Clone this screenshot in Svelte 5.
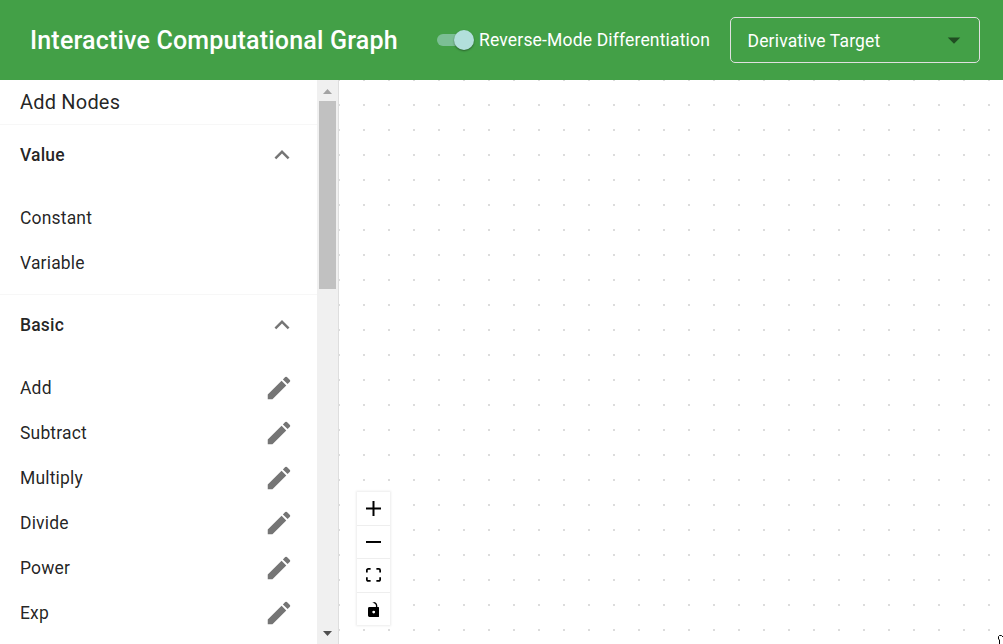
<script>
  const groups = [
    { name: 'Value', editable: false, items: ['Constant', 'Variable'] },
    { name: 'Basic', editable: true, items: ['Add', 'Subtract', 'Multiply', 'Divide', 'Power', 'Exp'] },
  ];
  const controls = [
    { name: 'plus', box: '0 0 32 32', d: 'M32 18.133H18.133V32h-4.266V18.133H0v-4.266h13.867V0h4.266v13.867H32z' },
    { name: 'minus', box: '0 0 32 5', d: 'M0 0h32v4.2H0z' },
    {
      name: 'fit',
      box: '0 0 32 30',
      d: 'M3.692 4.63c0-.53.4-.938.939-.938h5.215V0H4.708C2.13 0 0 2.054 0 4.63v5.216h3.692V4.631zM27.354 0h-5.2v3.692h5.17c.53 0 .984.4.984.939v5.215H32V4.631A4.624 4.624 0 0027.354 0zm.954 24.83c0 .532-.4.94-.939.94h-5.215v3.768h5.215c2.577 0 4.631-2.13 4.631-4.707v-5.139h-3.692v5.139zm-23.677.94c-.531 0-.939-.4-.939-.94v-5.138H0v5.139c0 2.577 2.13 4.707 4.708 4.707h5.138V25.77H4.631z',
    },
    {
      name: 'lock',
      box: '0 0 25 32',
      d: 'M21.333 10.667H19.81V7.619C19.81 3.429 16.38 0 12.19 0c-4.114 1.828-1.37 2.133.305 2.438 1.676.305 4.42 2.59 4.42 5.181v3.048H3.047A3.056 3.056 0 000 13.714v15.238A3.056 3.056 0 003.048 32h18.285a3.056 3.056 0 003.048-3.048V13.714a3.056 3.056 0 00-3.048-3.047zM12.19 24.533a3.056 3.056 0 01-3.047-3.047 3.056 3.056 0 013.047-3.048 3.056 3.056 0 013.048 3.048 3.056 3.056 0 01-3.048 3.047z',
    },
  ];
</script>

<div class="app">
  <header>
    <h1>Interactive Computational Graph</h1>
    <div class="mode">
      <span class="switch"><span class="thumb"></span></span>
      <span>Reverse-Mode Differentiation</span>
    </div>
    <div class="select">
      <span>Derivative Target</span>
      <svg viewBox="0 0 24 24" width="30" height="30"><path d="M7 10l5 5 5-5z" /></svg>
    </div>
  </header>
  <div class="body">
    <aside>
      <div class="list">
        <h2>Add Nodes</h2>
        {#each groups as group}
          <section>
            <div class="head">
              <span>{group.name}</span>
              <svg viewBox="0 0 24 24" width="30" height="30"><path d="M12 8l-6 6 1.41 1.41L12 10.83l4.59 4.58L18 14z" /></svg>
            </div>
            {#each group.items as item}
              <div class="item">
                <span>{item}</span>
                {#if group.editable}
                  <svg viewBox="0 0 24 24" width="30" height="30"><path d="M3 17.25V21h3.75L17.81 9.94l-3.75-3.75L3 17.25zM20.71 7.04c.39-.39.39-1.02 0-1.41l-2.34-2.34a.9959.9959 0 0 0-1.41 0l-1.83 1.83 3.75 3.75 1.83-1.83z" /></svg>
                {/if}
              </div>
            {/each}
          </section>
        {/each}
      </div>
      <div class="scroll">
        <svg class="up" viewBox="0 0 9 5" width="9" height="5"><path d="M4.5 0L9 5H0z" /></svg>
        <div class="bar"></div>
        <svg class="down" viewBox="0 0 9 5" width="9" height="5"><path d="M0 0h9L4.5 5z" /></svg>
      </div>
    </aside>
    <main>
      <svg class="dots" width="100%" height="100%">
        <pattern id="grid" x="-1" y="-1" width="25" height="25" patternUnits="userSpaceOnUse">
          <rect width="2" height="2" fill="#dcdcdc" />
        </pattern>
        <rect width="100%" height="100%" fill="url(#grid)" />
      </svg>
      <div class="controls">
        {#each controls as c}
          <div class="control">
            <svg class={c.name} viewBox={c.box}><path d={c.d} /></svg>
          </div>
        {/each}
      </div>
      <svg class="pointer" width="5" height="9" viewBox="0 0 5 9">
        <path d="M1.5 9V5L.5 4V1.5L1.5.5H3.5L5 2" fill="#fff" stroke="#000" />
      </svg>
    </main>
  </div>
</div>

<style>
  :global(body) { margin: 0; overflow: hidden; }
  .app {
    width: 1003px;
    height: 644px;
    display: flex;
    flex-direction: column;
    overflow: hidden;
    background: #fff;
    color: rgba(0, 0, 0, 0.87);
    font-family: Roboto, sans-serif;
  }
  svg { display: block; flex: none; }
  header {
    height: 80px;
    flex: none;
    box-sizing: border-box;
    display: flex;
    align-items: center;
    padding: 0 23px 0 30px;
    background: #43a047;
    color: #fff;
    white-space: nowrap;
  }
  h1 {
    width: 407px;
    margin: 0;
    padding-top: 2px;
    font-size: 25px;
    line-height: 40px;
    font-weight: 500;
    letter-spacing: 0.1875px;
  }
  .mode {
    width: 293px;
    display: flex;
    align-items: center;
    gap: 5px;
    font-size: 17.5px;
    line-height: 26px;
    letter-spacing: 0.17px;
  }
  .switch {
    width: 37px;
    height: 12px;
    display: flex;
    align-items: center;
    justify-content: flex-end;
    background: linear-gradient(#7bbf94, #7bbf94) left / 32px 12px no-repeat;
    border-radius: 6px;
  }
  .thumb {
    width: 20px;
    height: 20px;
    border-radius: 50%;
    background: #b2dfdb;
    box-shadow: 0 1px 2px rgba(0, 0, 0, 0.4);
  }
  .select {
    width: 250px;
    height: 46px;
    box-sizing: border-box;
    display: flex;
    align-items: center;
    justify-content: space-between;
    padding: 0 10px 0 16.5px;
    border: 1px solid #e0e0e0;
    border-radius: 5px;
    font-size: 17.5px;
    line-height: 24px;
    letter-spacing: 0.17px;
  }
  .select span { padding-top: 2px; }
  .select svg { fill: #204d22; }
  .body { flex: 1; min-height: 0; display: flex; }
  aside {
    width: 338px;
    flex: none;
    display: flex;
    border-right: 1px solid #dedede;
  }
  .list { flex: 1; overflow: hidden; }
  h2 {
    height: 44px;
    margin: 0;
    padding-left: 20px;
    font-size: 20px;
    line-height: 44px;
    font-weight: 400;
    letter-spacing: 0.19px;
  }
  section {
    border-top: 1px solid #f7f7f7;
    padding-bottom: 9px;
  }
  .head, .item {
    display: flex;
    align-items: center;
    justify-content: space-between;
    padding-left: 20px;
    font-size: 17.5px;
    line-height: 25px;
    letter-spacing: 0.17px;
  }
  .head { height: 60px; padding-right: 20px; margin-bottom: 10px; font-weight: 500; }
  .head span { padding-top: 1px; }
  .item { height: 45px; padding-right: 23px; }
  .item span { padding-top: 2px; }
  .head svg, .item svg { fill: #757575; }
  .scroll {
    width: 21px;
    box-sizing: border-box;
    display: flex;
    flex-direction: column;
    align-items: center;
    background: #f0f0f0;
    padding: 9px 2px 8px;
  }
  .bar { width: 17px; height: 188px; margin-top: 7px; background: #c1c1c1; }
  .up { fill: #a3a3a3; }
  .down { margin-top: auto; fill: #505050; }
  main { position: relative; flex: 1; overflow: hidden; }
  .controls {
    position: absolute;
    left: 18px;
    top: 412px;
    width: 33px;
    box-shadow: 0 0 2px 1px rgba(0, 0, 0, 0.08);
  }
  .control {
    height: 33px;
    box-sizing: border-box;
    display: flex;
    align-items: center;
    justify-content: center;
    background: #fff;
  }
  .control + .control { border-top: 1px solid #eee; height: 33.33px; }
  .plus, .minus, .fit { width: 15px; }
  .lock { height: 15px; margin-top: 1px; }
  .pointer { position: absolute; right: 0; bottom: 0; }
</style>
